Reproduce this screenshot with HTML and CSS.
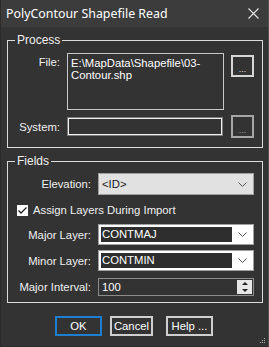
FILE: index.html
```html
<!DOCTYPE html>
<html lang="en">
<head>
    <meta charset="UTF-8">
    <title>PolyContour Shapefile Read</title>
    <link rel="stylesheet" href="styles.css">
</head>
<body>
    <div class="window">
        <div class="titlebar">
            <span class="title">PolyContour Shapefile Read</span>
            <svg class="close" width="11" height="11" viewBox="0 0 11 11">
                <path d="M0.5 0.5 L10.5 10.5 M10.5 0.5 L0.5 10.5" stroke="#e6e6e6" stroke-width="1.1" fill="none"/>
            </svg>
        </div>

        <div class="client">
            <fieldset class="group process">
                <legend>Process</legend>
                <div class="row file-row">
                    <label class="lbl lbl-top">File:</label>
                    <div class="textarea">E:\MapData\Shapefile\03-<br>Contour.shp</div>
                    <button class="browse">...</button>
                </div>
                <div class="row system-row">
                    <label class="lbl">System:</label>
                    <div class="textbox disabled"></div>
                    <button class="browse off">...</button>
                </div>
            </fieldset>

            <fieldset class="group fields">
                <legend>Fields</legend>
                <div class="frow elev-row">
                    <label class="lbl">Elevation:</label>
                    <div class="combo list">
                        <span class="combo-text">&lt;ID&gt;</span>
                        <svg class="chev" width="9" height="5" viewBox="0 0 9 5"><path d="M0.5 0.5 L4.5 4.5 L8.5 0.5" stroke="#555" fill="none"/></svg>
                    </div>
                </div>
                <div class="check-row">
                    <span class="checkbox">
                        <svg width="11" height="11" viewBox="0 0 11 11"><path d="M1.5 5.5 L4 8 L9.5 2.5" stroke="#222" stroke-width="1.3" fill="none"/></svg>
                    </span>
                    <span>Assign Layers During Import</span>
                </div>
                <div class="frow layer-row">
                    <label class="lbl">Major Layer:</label>
                    <div class="combo edit">
                        <span class="combo-edit">CONTMAJ</span>
                        <svg class="chev" width="9" height="5" viewBox="0 0 9 5"><path d="M0.5 0.5 L4.5 4.5 L8.5 0.5" stroke="#555" fill="none"/></svg>
                    </div>
                </div>
                <div class="frow layer-row">
                    <label class="lbl">Minor Layer:</label>
                    <div class="combo edit">
                        <span class="combo-edit">CONTMIN</span>
                        <svg class="chev" width="9" height="5" viewBox="0 0 9 5"><path d="M0.5 0.5 L4.5 4.5 L8.5 0.5" stroke="#555" fill="none"/></svg>
                    </div>
                </div>
                <div class="frow spin-row">
                    <label class="lbl">Major Interval:</label>
                    <div class="spin">
                        <span class="spin-text">100</span>
                        <div class="spin-btns">
                            <span class="arrow up"></span>
                            <span class="arrow down"></span>
                        </div>
                    </div>
                </div>
            </fieldset>

            <div class="buttons">
                <button class="btn ok">OK</button>
                <button class="btn cancel">Cancel</button>
                <button class="btn help">Help ...</button>
            </div>
            <div class="grip">
                <svg width="7" height="7" viewBox="0 0 7 7">
                    <rect x="5" y="1" width="1" height="1" fill="#aaa"/>
                    <rect x="5" y="3" width="1" height="1" fill="#aaa"/>
                    <rect x="3" y="3" width="1" height="1" fill="#aaa"/>
                    <rect x="5" y="5" width="1" height="1" fill="#aaa"/>
                    <rect x="3" y="5" width="1" height="1" fill="#aaa"/>
                    <rect x="1" y="5" width="1" height="1" fill="#aaa"/>
                </svg>
            </div>
        </div>
    </div>
</body>
</html>
```

FILE: styles.css
```css
html, body {
    margin: 0;
    padding: 0;
    background: #333333;
}

body {
    font-family: "Liberation Sans", Arial, sans-serif;
    font-size: 11.3px;
    color: #f0f0f0;
}

.window {
    width: 269px;
    height: 347px;
    box-sizing: border-box;
    background: #333333;
    border-right: 1px solid #505050;
    border-left: 1px solid #2a2a2a;
    border-bottom: 1px solid #2a2a2a;
}

.titlebar {
    height: 27px;
    background: #3c3c3c;
    display: flex;
    align-items: center;
    justify-content: space-between;
    padding: 0 9px 0 5px;
}

.title {
    font-family: "Noto Sans", "Open Sans", sans-serif;
    font-size: 12.4px;
    color: #ffffff;
}

.close {
    display: block;
}

.client {
    position: relative;
    height: 319px;
    padding-top: 6px;
    box-sizing: border-box;
}

.group {
    margin: 0 0 0 6px;
    width: 256px;
    box-sizing: border-box;
    border: 1px solid #dcdcdc;
    padding: 0;
    min-width: 0;
}

.group legend {
    margin-left: 7px;
    padding: 0 2px;
    line-height: 14px;
    font-size: 12px;
    color: #f0f0f0;
}

.process {
    padding: 6px 0 8px 0;
    height: 115px;
}

.row {
    display: grid;
    grid-template-columns: 52px 157px 23px;
    column-gap: 7px;
    padding-left: 0;
}

.file-row {
    height: 57px;
    align-items: start;
}

.system-row {
    margin-top: 5px;
    height: 23px;
    align-items: center;
}

.lbl {
    text-align: right;
    white-space: nowrap;
}

.lbl-top {
    padding-top: 3px;
}

.textarea {
    height: 57px;
    box-sizing: border-box;
    border: 1px solid #c8c8c8;
    padding: 3px 3px;
    line-height: 12px;
    color: #ffffff;
}

.textbox {
    height: 19px;
    box-sizing: border-box;
    border: 1px solid #7a7a7a;
    box-shadow: inset 0 0 0 1px #f2f2f2;
    margin-right: 1px;
}

.browse {
    width: 23px;
    height: 22px;
    margin: 2px 0 0 0;
    box-sizing: border-box;
    border: 2px solid #d6d6d6;
    background: #333333;
    color: #e0e0e0;
    font-family: "Liberation Sans", Arial, sans-serif;
    font-size: 9px;
    padding: 6px 0 0 0;
    line-height: 10px;
}

.system-row .browse {
    margin: 0;
    height: 23px;
}

.browse.off {
    border-color: #a6a6a6;
    color: #9a9a9a;
}

.fields {
    margin-top: 6px;
    padding: 5px 0 8px 0;
    height: 149px;
}

.frow {
    display: grid;
    grid-template-columns: 83px 156px;
    column-gap: 7px;
    align-items: center;
}

.elev-row {
    height: 22px;
}

.layer-row {
    height: 21px;
    margin-top: 5px;
}

.spin-row {
    height: 18px;
    margin-top: 7px;
}

.combo {
    box-sizing: border-box;
    display: flex;
    align-items: center;
    position: relative;
    border: 1px solid #a0a0a0;
}

.combo.list {
    height: 22px;
    background: #e1e1e1;
    color: #1a1a1a;
    padding-left: 3px;
}

.combo-text {
    flex: 1;
}

.chev {
    display: block;
    margin-right: 6px;
}

.combo.edit {
    height: 21px;
    background: #ffffff;
    padding: 2px 0 2px 2px;
}

.combo-edit {
    flex: 1;
    align-self: stretch;
    background: #2e2e2e;
    color: #ffffff;
    line-height: 15px;
    padding-left: 1px;
    margin-right: 6px;
}

.check-row {
    display: flex;
    align-items: center;
    height: 18px;
    margin-top: 6px;
    padding-left: 9px;
    gap: 5px;
}

.checkbox {
    width: 11px;
    height: 11px;
    background: #ffffff;
    display: block;
}

.checkbox svg {
    display: block;
}

.spin {
    height: 18px;
    box-sizing: border-box;
    border: 1px solid #8c8c8c;
    display: flex;
    align-items: center;
    padding: 0 1px 0 3px;
}

.spin-text {
    flex: 1;
    color: #ffffff;
}

.spin-btns {
    width: 15px;
    height: 14px;
    background: #e6e6e6;
    display: flex;
    flex-direction: column;
    justify-content: space-around;
    align-items: center;
}

.arrow {
    width: 0;
    height: 0;
    border-left: 3px solid transparent;
    border-right: 3px solid transparent;
}

.arrow.up {
    border-bottom: 3px solid #222;
}

.arrow.down {
    border-top: 3px solid #222;
}

.buttons {
    display: flex;
    margin-top: 13px;
    padding-left: 54px;
}

.btn {
    height: 20px;
    box-sizing: border-box;
    background: #333333;
    color: #ffffff;
    border: 2px solid #cfcfcf;
    font-family: "Liberation Sans", Arial, sans-serif;
    font-size: 11.3px;
    padding: 0;
    line-height: 15px;
}

.btn.ok {
    width: 47px;
    border-color: #1e7fd0;
}

.btn.cancel {
    width: 43px;
    margin-left: 8px;
}

.btn.help {
    width: 47px;
    margin-left: 13px;
}

.grip {
    position: absolute;
    right: 2px;
    bottom: 2px;
    line-height: 0;
}
```
